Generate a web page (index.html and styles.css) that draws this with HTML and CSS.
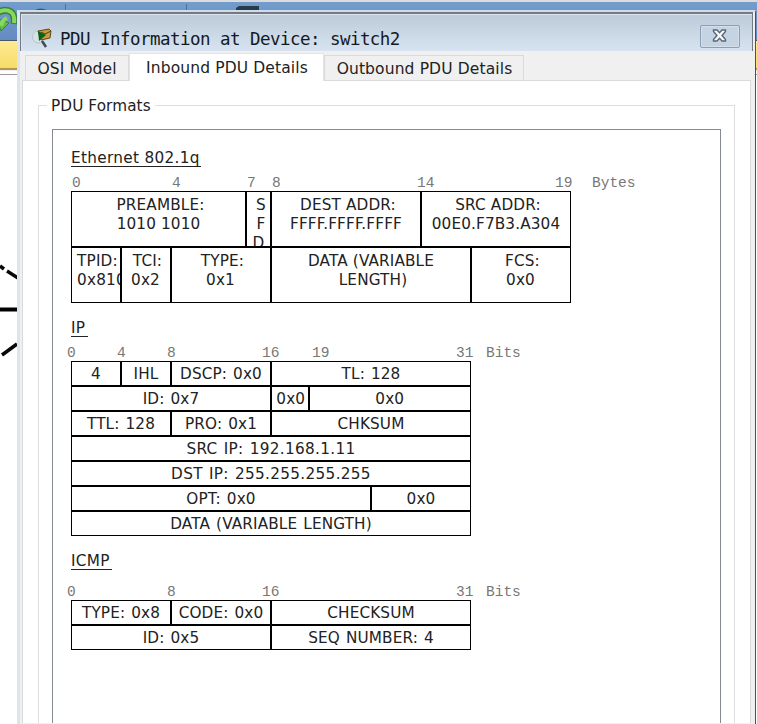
FILE: index.html
```html
<!DOCTYPE html>
<html lang="en">
<head>
<meta charset="utf-8">
<title>PDU Information at Device: switch2</title>
<link rel="stylesheet" href="styles.css">
</head>
<body>
<div class="workspace">
  <div class="toolbar">
    <svg width="270" height="38" viewBox="0 2 270 38">
      <path d="M-3 13Q5 8 11 12Q15 15 14 24" fill="none" stroke="#3c7f3e" stroke-width="7"/>
      <path d="M-4 18L9 23L1 31z" fill="#63bd4c" stroke="#3c7f3e"/>
      <path d="M-3 13Q5 8 11 12Q15 15 14 23M1 26Q2 20 7 18" fill="none" stroke="#85db59" stroke-width="4"/>
      <path d="M35 10Q40 7 47 10V12H35z" fill="#266653"/>
      <path d="M65.500 4V12M186.500 4V12" stroke="#4c6e9c" stroke-width="1"/>
      <path d="M236 8L239 6H259V12H236z" fill="#263c49"/>
    </svg>
  </div>
  <div class="yellow-bar"></div>
  <div class="canvas">
    <svg width="18" height="110" viewBox="0 260 18 110">
      <path d="M0 266L4 269M7 271L18 278M2 355L17 344" stroke="#080808" stroke-width="3.500"/>
      <path d="M0 309.500H18" stroke="#000" stroke-width="4"/>
    </svg>
  </div>
</div>

<main class="dialog">
  <header class="titlebar">
    <svg class="app-icon" width="21" height="20" viewBox="0 0 21 20">
      <ellipse cx="6" cy="9" rx="5.500" ry="6" fill="#d9e2e2" stroke="#b5c4cc"/>
      <path d="M6 3L17 1L19 3L18 10L9 12z" fill="#c99b3e" stroke="#5d4820" stroke-width="1"/>
      <path d="M9 4L13 6L19 3" fill="none" stroke="#513f22"/>
      <path d="M6 3L14 7L7 13z" fill="#07621a"/>
      <path d="M10 13L14 19" stroke="#3f4b55" stroke-width="2.500"/>
    </svg>
    <h1>PDU Information at Device: switch2</h1>
    <button class="close" aria-label="Close">
      <svg width="15" height="13" viewBox="0 0 15 13"><path d="M1.500 1H5L7.500 3.700L10 1H13.500V2.500L10 6.500L13.500 10.500V12H10L7.500 9.300L5 12H1.500V10.500L5 6.500L1.500 2.500z" fill="#f5f7f9" stroke="#5c6573" stroke-width="1.400"/></svg>
    </button>
  </header>
  <nav class="tabs">
    <div class="tab tab-osi">OSI Model</div>
    <div class="tab active">Inbound PDU Details</div>
    <div class="tab tab-out">Outbound PDU Details</div>
  </nav>
  <section class="pane">
    <fieldset class="group">
      <legend>PDU Formats</legend>
      <div class="view">
        <section class="ethernet">
          <h2 class="h-eth">Ethernet 802.1q</h2>
          <div class="ruler bytes"><span>0</span><span>4</span><span>7</span><span>8</span><span>14</span><span>19</span><span>Bytes</span></div>
          <div class="frame eth-frame">
            <div class="cell w7">PREAMBLE:<br><span class="value">1010 1010</span></div>
            <div class="cell w1 sfd">S<br>F<br><span class="last">D</span></div>
            <div class="cell w6">DEST ADDR:<br><span class="value">FFFF.FFFF.FFFF</span></div>
            <div class="cell w6">SRC ADDR:<br><span class="value">00E0.F7B3.A304</span></div>
            <div class="cell w2 left">TPID:<br>0x8100</div>
            <div class="cell w2 low">TCI:<br><span class="value">0x2</span></div>
            <div class="cell w4 low">TYPE:<br><span class="value">0x1</span></div>
            <div class="cell w8 data">DATA (VARIABLE<br><span class="tail">LENGTH)</span></div>
            <div class="cell w4 low">FCS:<br><span class="value">0x0</span></div>
          </div>
        </section>
        <section class="ip">
          <h2 class="h-ip">IP</h2>
          <div class="ruler ip-bits"><span>0</span><span>4</span><span>8</span><span>16</span><span>19</span><span>31</span><span>Bits</span></div>
          <div class="frame bit-frame">
            <div class="cell w4">4</div><div class="cell w4">IHL</div><div class="cell w8">DSCP: 0x0</div><div class="cell w16">TL: 128</div>
            <div class="cell w16">ID: 0x7</div><div class="cell w3 flags">0x0</div><div class="cell w13">0x0</div>
            <div class="cell w8">TTL: 128</div><div class="cell w8">PRO: 0x1</div><div class="cell w16">CHKSUM</div>
            <div class="cell w32 address">SRC IP: 192.168.1.11</div>
            <div class="cell w32 address">DST IP: 255.255.255.255</div>
            <div class="cell w24">OPT: 0x0</div><div class="cell w8">0x0</div>
            <div class="cell w32">DATA (VARIABLE LENGTH)</div>
          </div>
        </section>
        <section class="icmp">
          <h2 class="h-icmp">ICMP</h2>
          <div class="ruler icmp-bits"><span>0</span><span>8</span><span>16</span><span>31</span><span>Bits</span></div>
          <div class="frame bit-frame">
            <div class="cell w8">TYPE: 0x8</div><div class="cell w8">CODE: 0x0</div><div class="cell w16">CHECKSUM</div>
            <div class="cell w16">ID: 0x5</div><div class="cell w16">SEQ NUMBER: 4</div>
          </div>
        </section>
      </div>
    </fieldset>
  </section>
</main>
</body>
</html>
```
FILE: styles.css
```css
* { box-sizing: border-box; }
html, body { margin: 0; height: 724px; overflow: hidden; }
body { position: relative; background: #fff; color: #222; font-family: "DejaVu Sans", sans-serif; font-size: 15.25px; }
h1, h2 { margin: 0; font-weight: 400; }
svg { display: block; }

.workspace { height: 724px; border-top: 2px solid #dcdcdc; }
.toolbar { height: 38px; background: linear-gradient(#729dcc, #668bc3); }
.yellow-bar { height: 30px; background: linear-gradient(#ffeb90, #f7dc6b); border-top: 1px solid #4c5564; border-bottom: 2px solid #b49a48; }
.canvas { height: 654px; padding-top: 189px; border-top: 1px solid #eee; background: linear-gradient(#999, #999) 0 3px / 100% 1px no-repeat #fff; }

.dialog { position: absolute; left: 17px; top: 10px; width: 739px; height: 714px; border-left: 3px solid #dbe5f1; border-right: 1px solid #4b4d58; border-top: 2px solid #cfdcec; background: #f0f0f0; }
.titlebar { display: flex; height: 39px; margin-right: 2px; border: solid #737a84; border-width: 2px 1px 0; background: linear-gradient(#bccbd9, #d7e3f1); box-shadow: inset 1px 1px #dde6ee; }
.app-icon { margin: 14px 0 0 11px; }
h1 { width: 345px; margin: 11px 0 0 7px; font: 17.5px/28px "DejaVu Sans Mono", monospace; letter-spacing: -.54px; white-space: nowrap; color: #15191f; }
.close { display: flex; align-items: center; justify-content: center; width: 40px; height: 23px; margin: 11px 12px 0 auto; padding: 0 2px 2px 0; border: 1px solid #8c9dba; border-radius: 2px; background: #c5d4e3; box-shadow: inset 0 0 0 1px #d4dfeb; }

.tabs { display: flex; align-items: flex-end; height: 29px; padding-left: 5px; }
.tab { display: flex; align-items: center; justify-content: center; height: 25px; padding-top: 1px; border: 1px solid #dadada; border-bottom: 0; background: #f0f0f0; font-size: 15.5px; line-height: 20px; letter-spacing: .13px; white-space: nowrap; }
.tab-osi { width: 104px; }
.tab.active { position: relative; width: 195px; height: 28px; margin-bottom: -1px; padding: 0 0 0 1px; background: #fff; border-color: #e4e4e4; }
.tab-out { width: 200px; padding-left: 1px; }
.pane { height: 643px; margin: 0 4px 0 2px; padding: 14px 15px 0 15px; background: #fff; border: 1px solid #dadada; border-bottom: 0; }
.group { height: 628px; margin: 0; padding: 14px 13px 0; border: 1px solid #dedede; border-bottom: 0; min-width: 0; }
legend { height: 20px; margin-left: -5px; padding: 1px 4px 0; line-height: 20px; letter-spacing: .1px; white-space: nowrap; }
.view { height: 594px; padding: 19px 0 0 18px; border: 1px solid #858a92; border-bottom: 0; }

h2 { width: max-content; height: 18px; border-bottom: 1px solid #222; font-size: 15.25px; line-height: 19px; letter-spacing: .33px; white-space: nowrap; }
.h-eth { width: 130px; }
.h-ip { width: 17px; }
.h-icmp { width: 41px; }
.ruler { display: grid; height: 16px; font: 14.5px/16px "Liberation Mono", monospace; color: #777; white-space: nowrap; }
.bytes { grid-template-columns: 100px 75px 25px 145px 138px 37px 50px; margin: 8px 0 0 1px; }
.ip-bits { grid-template-columns: 50px 50px 95px 50px 144px 30px 40px; margin: 8px 0 0 -4px; }
.icmp-bits { grid-template-columns: 100px 95px 194px 30px 40px; margin: 14px 0 0 -4px; }

.frame { display: grid; width: max-content; line-height: 19px; letter-spacing: .14px; text-align: center; }
.eth-frame { grid-template-columns: repeat(20, 25px); grid-auto-rows: 56px; }
.bit-frame { grid-template-columns: repeat(32, 12.5px); grid-auto-rows: 25px; word-spacing: 1px; }
.cell { min-width: 0; overflow: hidden; padding-top: 3px; border: 1px solid #000; white-space: nowrap; }
.eth-frame .cell { padding: 4px 0 0 4px; }
.eth-frame .low { padding-left: 3px; }
.eth-frame .data { padding-left: 0; }
.eth-frame .left { padding-left: 5px; text-align: left; letter-spacing: .2px; }
.eth-frame .sfd { padding-left: 5px; }
.value { margin-right: 4px; }
.tail { margin-left: 4px; }
.last { margin-left: -5px; }
.address { letter-spacing: .33px; }
.flags { padding-left: 2px; }
.w1 { grid-column: span 1; }
.w2 { grid-column: span 2; }
.w3 { grid-column: span 3; }
.w4 { grid-column: span 4; }
.w6 { grid-column: span 6; }
.w7 { grid-column: span 7; }
.w8 { grid-column: span 8; }
.w13 { grid-column: span 13; }
.w16 { grid-column: span 16; }
.w24 { grid-column: span 24; }
.w32 { grid-column: span 32; }
.ip { margin-top: 16px; }
.icmp { margin-top: 16px; }
```
